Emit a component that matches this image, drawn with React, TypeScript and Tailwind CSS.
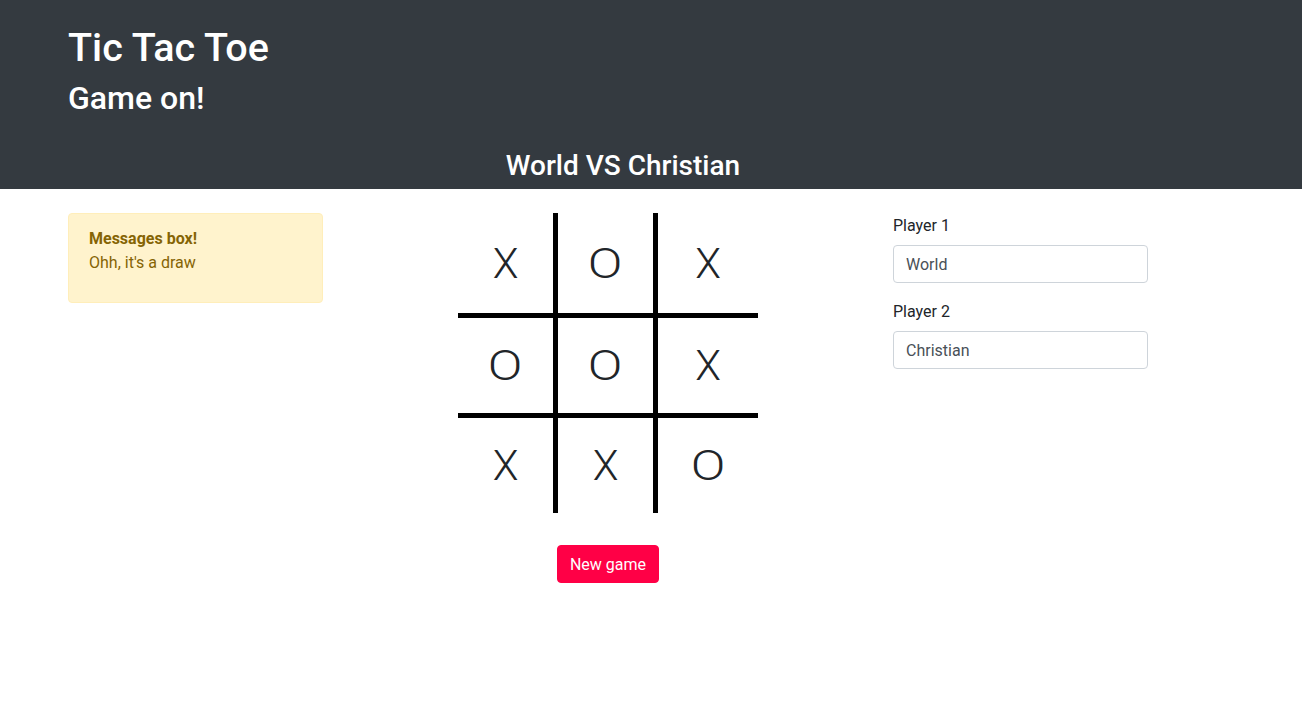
import React from "react";

const board = [
  ["X", "O", "X"],
  ["O", "O", "X"],
  ["X", "X", "O"],
];

function Cell({ v }: { v: string }) {
  return (
    <div className="flex items-center justify-center pt-[2px] text-[42px] font-light leading-none text-[#212529]">
      <span className={v === "O" ? "inline-block scale-x-[1.22]" : "inline-block"}>{v}</span>
    </div>
  );
}

function HLine() {
  return <div className="col-span-5 bg-black" />;
}

export default function App() {
  const rows: React.ReactNode[] = [];
  board.forEach((r, i) => {
    r.forEach((v, j) => {
      rows.push(<Cell key={`c${i}${j}`} v={v} />);
      if (j < 2) rows.push(<div key={`v${i}${j}`} className="bg-black" />);
    });
    if (i < 2) rows.push(<HLine key={`h${i}`} />);
  });

  return (
    <div
      className="min-h-[709px] bg-white text-[16px] text-[#212529]"
      style={{ fontFamily: "Roboto, 'Liberation Sans', sans-serif" }}
    >
      <header className="bg-[#343a40] pt-[24px] pb-[6px] text-white">
        <div className="w-[1110px] ml-[68px]">
          <h1 className="mb-[7px] h-[48px] text-[39.5px] font-medium leading-[48px]">Tic Tac Toe</h1>
          <h2 className="text-[32px] font-medium leading-[1.2]">Game on!</h2>
          <h3 className="mt-[32px] text-center text-[28px] font-medium leading-[1.2]">
            World VS Christian
          </h3>
        </div>
      </header>

      <main className="ml-[68px] mt-6 flex items-start">
        <div className="w-[255px] rounded border border-[#ffeeba] bg-[#fff3cd] px-5 pt-[13px] pb-[11px] leading-6 text-[#856404]">
          <strong className="block font-bold">Messages box!</strong>
          <p className="mb-4">Ohh, it's a draw</p>
        </div>

        <div className="ml-[30px] flex w-[510px] flex-col items-center">
          <div className="grid grid-cols-[95px_5px_95px_5px_100px] grid-rows-[100px_5px_95px_5px_95px]">
            {rows}
          </div>
          <button className="mt-8 rounded border border-[#ff0046] bg-[#ff0046] px-3 pt-[7px] pb-[5px] leading-6 text-white">
            New game
          </button>
        </div>

        <div className="ml-[30px] w-[255px]">
          <div className="mb-4">
            <label className="mb-[7px] block pt-[1px] leading-6">Player 1</label>
            <input
              readOnly
              value="World"
              className="block h-[38px] w-full rounded border border-[#ced4da] px-3 pt-[2px] text-[16px] text-[#495057] outline-none"
            />
          </div>
          <div className="mb-4">
            <label className="mb-[7px] block pt-[1px] leading-6">Player 2</label>
            <input
              readOnly
              value="Christian"
              className="block h-[38px] w-full rounded border border-[#ced4da] px-3 pt-[2px] text-[16px] text-[#495057] outline-none"
            />
          </div>
        </div>
      </main>
    </div>
  );
}
